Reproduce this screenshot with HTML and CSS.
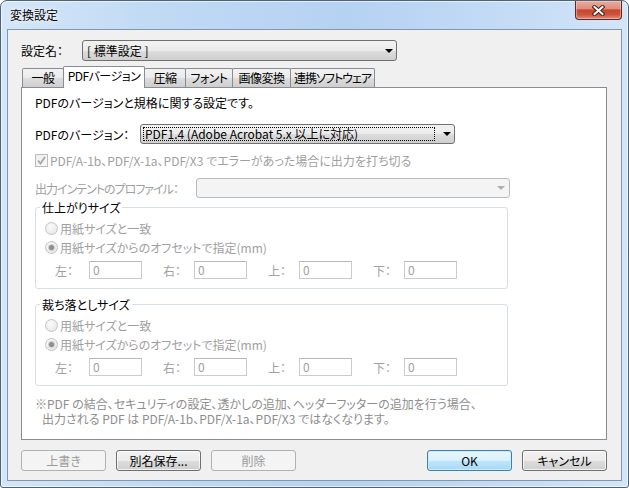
FILE: index.html
```html
<!DOCTYPE html>
<html lang="ja">
<head>
    <meta charset="UTF-8">
    <title>変換設定</title>
    <link rel="stylesheet" href="styles.css">
</head>
<body>
    <div class="window">
        <div class="titlebar">
            <span class="title">変換設定</span>
            <div class="close-btn">
                <svg width="13" height="11" viewBox="0 0 13 11">
                    <path d="M2.5 2 L10.5 9 M10.5 2 L2.5 9" stroke="#4b1d14" stroke-width="4" stroke-linecap="square" fill="none"/>
                    <path d="M2.5 2 L10.5 9 M10.5 2 L2.5 9" stroke="#ffffff" stroke-width="2" stroke-linecap="square" fill="none"/>
                </svg>
            </div>
        </div>

        <div class="client">
            <div class="preset-row">
                <span class="preset-label">設定名：</span>
                <div class="combo preset-combo">
                    <span class="combo-text">[ 標準設定 ]</span>
                    <span class="arrow"></span>
                </div>
            </div>

            <div class="tabs">
                <div class="tab tab-general">一般</div>
                <div class="tab tab-version active">PDFバージョン</div>
                <div class="tab tab-compress">圧縮</div>
                <div class="tab tab-font">フォント</div>
                <div class="tab tab-image">画像変換</div>
                <div class="tab tab-link">連携ソフトウェア</div>
            </div>

            <div class="panel">
                <p class="desc">PDFのバージョンと規格に関する設定です。</p>

                <div class="form-row version-row">
                    <span class="row-label version-label">PDFのバージョン：</span>
                    <div class="combo version-combo">
                        <span class="combo-focus">PDF1.4 (Adobe Acrobat 5.x 以上に対応)</span>
                        <span class="arrow"></span>
                    </div>
                </div>

                <div class="check-row disabled">
                    <span class="checkbox">
                        <svg width="11" height="11" viewBox="0 0 11 11">
                            <path d="M2 5.5 L4.5 8.5 L9 2" stroke="#a6a6a6" stroke-width="1.8" fill="none"/>
                        </svg>
                    </span>
                    <span>PDF/A-1b、PDF/X-1a、PDF/X3 でエラーがあった場合に出力を打ち切る</span>
                </div>

                <div class="form-row profile-row disabled">
                    <span class="row-label profile-label">出力インテントのプロファイル：</span>
                    <div class="combo profile-combo">
                        <span class="combo-text"></span>
                        <span class="arrow"></span>
                    </div>
                </div>

                <fieldset class="group first">
                    <legend>仕上がりサイズ</legend>
                    <div class="radio-row first">
                        <span class="radio"></span>
                        <span>用紙サイズと一致</span>
                    </div>
                    <div class="radio-row">
                        <span class="radio checked"></span>
                        <span>用紙サイズからのオフセットで指定(mm)</span>
                    </div>
                    <div class="offset-row">
                        <span class="offset-label">左：</span><span class="field">0</span>
                        <span class="offset-label">右：</span><span class="field">0</span>
                        <span class="offset-label">上：</span><span class="field">0</span>
                        <span class="offset-label">下：</span><span class="field">0</span>
                    </div>
                </fieldset>

                <fieldset class="group">
                    <legend>裁ち落としサイズ</legend>
                    <div class="radio-row first">
                        <span class="radio"></span>
                        <span>用紙サイズと一致</span>
                    </div>
                    <div class="radio-row">
                        <span class="radio checked"></span>
                        <span>用紙サイズからのオフセットで指定(mm)</span>
                    </div>
                    <div class="offset-row">
                        <span class="offset-label">左：</span><span class="field">0</span>
                        <span class="offset-label">右：</span><span class="field">0</span>
                        <span class="offset-label">上：</span><span class="field">0</span>
                        <span class="offset-label">下：</span><span class="field">0</span>
                    </div>
                </fieldset>

                <p class="note">
                    <span class="note-line">※PDF の結合、セキュリティの設定、透かしの追加、ヘッダーフッターの追加を行う場合、</span>
                    <span class="note-line indent">出力される PDF は PDF/A-1b、PDF/X-1a、PDF/X3 ではなくなります。</span>
                </p>
            </div>

            <div class="button-bar">
                <div class="button-group">
                    <button class="btn" disabled>上書き</button>
                    <button class="btn">別名保存...</button>
                    <button class="btn" disabled>削除</button>
                </div>
                <div class="button-group">
                    <button class="btn default">OK</button>
                    <button class="btn">キャンセル</button>
                </div>
            </div>
        </div>
    </div>
</body>
</html>
```

FILE: styles.css
```css
* {
    box-sizing: border-box;
}

body {
    margin: 0;
    background: #ffffff;
    font-family: "Noto Sans CJK JP", "Noto Sans", sans-serif;
    font-size: 12px;
    font-feature-settings: "palt";
    color: #000;
}

.window {
    width: 629px;
    height: 488px;
    display: flex;
    flex-direction: column;
    border: 1px solid #4f6377;
    border-radius: 7px 7px 3px 3px;
    background: linear-gradient(90deg, #d4e6f8 0%, #c0daf4 25%, #b5d2f1 55%, #c3dbf5 80%, #d3e5f8 100%);
    box-shadow: inset 0 0 0 1px rgba(255, 255, 255, 0.6);
}

/* title bar */
.titlebar {
    height: 28px;
    display: flex;
    justify-content: space-between;
    align-items: flex-start;
    padding: 0 6px 0 9px;
}

.title {
    line-height: 28px;
    text-shadow: 0 0 6px rgba(255, 255, 255, 0.9), 0 0 2px rgba(255, 255, 255, 0.9);
}

.close-btn {
    width: 47px;
    height: 19px;
    display: flex;
    align-items: center;
    justify-content: center;
    border: 1px solid #5e2a20;
    border-top: none;
    border-radius: 0 0 4px 4px;
    background: linear-gradient(#e9ab9d 0%, #df8f7d 42%, #c8482f 50%, #c9553d 75%, #e08c78 100%);
    box-shadow: inset 0 0 0 1px rgba(255, 220, 210, 0.45);
}

/* client area */
.client {
    flex: 1;
    margin: 0 6px 6px 6px;
    border: 1px solid #8396aa;
    background: #f0f0f0;
    padding: 10px 14px 9px 13px;
    display: flex;
    flex-direction: column;
}

.preset-row {
    display: flex;
    align-items: center;
    height: 21px;
}

.preset-label {
    width: 61px;
}

.combo {
    display: flex;
    align-items: center;
    border: 1px solid #707070;
    border-radius: 3px;
    background: linear-gradient(#f2f2f2 0%, #ebebeb 50%, #dddddd 50%, #cfcfcf 100%);
}

.combo-text {
    flex: 1;
    white-space: nowrap;
}

.arrow {
    width: 0;
    height: 0;
    border-left: 4px solid transparent;
    border-right: 4px solid transparent;
    border-top: 4px solid #000;
}

.preset-combo {
    width: 315px;
    height: 21px;
    padding: 0 3px 0 4px;
}

/* tabs */
.tabs {
    display: flex;
    align-items: flex-end;
    height: 21px;
    margin-top: 5px;
    padding-left: 1px;
    position: relative;
    z-index: 1;
}

.tab {
    flex: none;
    height: 19px;
    margin-right: -1px;
    line-height: 17px;
    text-align: center;
    letter-spacing: -0.5px;
    border: 1px solid #898c95;
    border-bottom: none;
    border-radius: 2px 2px 0 0;
    background: linear-gradient(#f2f2f2 0%, #ebebeb 50%, #dddddd 50%, #cfcfcf 100%);
    white-space: nowrap;
}

.tab.active {
    height: 22px;
    margin-bottom: -1px;
    background: #ffffff;
    position: relative;
    z-index: 2;
}

.tab-general { width: 42px; }
.tab-version { width: 82px; }
.tab-compress { width: 42px; }
.tab-font { width: 48px; }
.tab-image { width: 59px; }
.tab-link { width: 85px; letter-spacing: -1px; }

.panel {
    flex: 1;
    border: 1px solid #898c95;
    background: #ffffff;
    padding: 7px 13px;
}

.desc {
    margin: 0;
    line-height: 15px;
}

.form-row {
    display: flex;
    align-items: center;
    height: 20px;
}

.version-row {
    margin-top: 14px;
}

.version-label {
    width: 105px;
}

.version-combo {
    width: 315px;
    height: 20px;
    padding: 0 3px 0 2px;
}

.combo-focus {
    flex: 1;
    height: 14px;
    line-height: 12px;
    padding-left: 1px;
    margin-right: 8px;
    border: 1px dotted #000;
    white-space: nowrap;
}

.disabled {
    color: #a0a0a0;
}

.check-row {
    display: flex;
    align-items: center;
    height: 16px;
    margin-top: 8px;
}

.checkbox {
    width: 13px;
    height: 13px;
    margin-right: 2px;
    display: flex;
    align-items: center;
    justify-content: center;
    border: 1px solid #bcbcbc;
    background: linear-gradient(135deg, #eeeeee, #fafafa);
}

.profile-row {
    margin-top: 10px;
}

.profile-label {
    width: 161px;
    letter-spacing: -1px;
    white-space: nowrap;
}

.profile-combo {
    width: 314px;
    height: 20px;
    padding: 0 4px;
    border-color: #b8bcbf;
    background: #f4f4f4;
}

.profile-combo .arrow {
    border-top-color: #b0b0b0;
}

/* group boxes */
.group {
    width: 473px;
    min-width: 0;
    margin: 8px 0 0 0;
    padding: 0 0 9px 0;
    border: 1px solid #d5dfe5;
    border-radius: 3px;
}

.group.first {
    margin-top: 2px;
}

.group legend {
    margin-left: 4px;
    padding: 0 2px;
    line-height: 15px;
}

.radio-row {
    display: flex;
    align-items: center;
    height: 16px;
    margin-top: 3px;
    padding-left: 9px;
    color: #a0a0a0;
}

.radio-row.first {
    margin-top: 5px;
}

.radio {
    width: 13px;
    height: 13px;
    margin-right: 2px;
    border: 1px solid #c4c4c4;
    border-radius: 50%;
    background: radial-gradient(circle at 40% 35%, #fbfbfb, #e2e2e2);
    display: flex;
    align-items: center;
    justify-content: center;
}

.radio.checked::after {
    content: "";
    width: 5px;
    height: 5px;
    border-radius: 50%;
    background: #8e8e8e;
    box-shadow: 0 0 0 1px #cfcfcf;
}

.offset-row {
    display: flex;
    align-items: center;
    height: 18px;
    margin-top: 6px;
    padding-left: 19px;
    color: #a0a0a0;
}

.offset-label {
    width: 34px;
}

.offset-label + .field ~ .offset-label {
    width: 31px;
}

.field {
    flex: none;
    width: 53px;
    height: 18px;
    margin-right: 21px;
    padding-left: 3px;
    line-height: 16px;
    border: 1px solid #c9cbcf;
    border-top-color: #b5b8bd;
    background: #ffffff;
}

.note {
    margin: 10px 0 0 0;
    color: #8e8e8e;
    line-height: 15px;
}

.note-line {
    display: block;
    white-space: nowrap;
}

.note-line.indent {
    padding-left: 7px;
}

/* bottom buttons */
.button-bar {
    display: flex;
    justify-content: space-between;
    margin-top: 10px;
}

.button-group {
    display: flex;
    gap: 10px;
}

.btn {
    width: 85px;
    height: 21px;
    padding: 0;
    font: inherit;
    color: #000;
    border: 1px solid #707070;
    border-radius: 3px;
    background: linear-gradient(#f2f2f2 0%, #ebebeb 50%, #dddddd 50%, #cfcfcf 100%);
    box-shadow: inset 0 0 0 1px rgba(255, 255, 255, 0.7);
}

.btn:disabled {
    color: #9a9a9a;
    border-color: #adb2b5;
    background: #f4f4f4;
    box-shadow: none;
}

.btn.default {
    border-color: #3c7fb1;
    background: linear-gradient(#eaf6fd 0%, #d9f0fc 50%, #bee6fd 50%, #a7d9f5 100%);
    box-shadow: inset 0 0 0 1px #c8ecfb;
}
```
